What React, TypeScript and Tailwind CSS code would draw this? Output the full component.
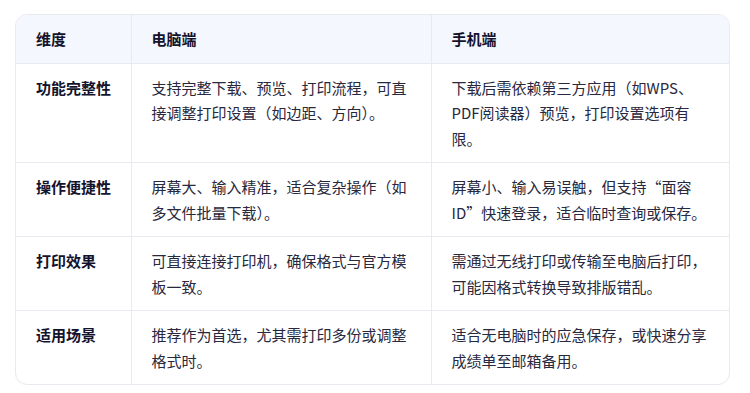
import React from 'react';

// ---------------------------------------------------------------------------
// Data
// ---------------------------------------------------------------------------

interface Row {
  dim: string;
  pc: string;
  mobile: string;
}

const headers = ['维度', '电脑端', '手机端'];

const rows: Row[] = [
  {
    dim: '功能完整性',
    pc: '支持完整下载、预览、打印流程，可直接调整打印设置（如边距、方向）。',
    mobile: '下载后需依赖第三方应用（如WPS、PDF阅读器）预览，打印设置选项有限。',
  },
  {
    dim: '操作便捷性',
    pc: '屏幕大、输入精准，适合复杂操作（如多文件批量下载）。',
    mobile: '屏幕小、输入易误触，但支持“面容ID”快速登录，适合临时查询或保存。',
  },
  {
    dim: '打印效果',
    pc: '可直接连接打印机，确保格式与官方模板一致。',
    mobile: '需通过无线打印或传输至电脑后打印，可能因格式转换导致排版错乱。',
  },
  {
    dim: '适用场景',
    pc: '推荐作为首选，尤其需打印多份或调整格式时。',
    mobile: '适合无电脑时的应急保存，或快速分享成绩单至邮箱备用。',
  },
];

// ---------------------------------------------------------------------------
// Component
// ---------------------------------------------------------------------------

export default function App() {
  return (
    <div className="min-h-[393px] w-[750px] bg-white pl-[15px] pt-[14px] font-['Noto_Sans_CJK_SC',sans-serif] text-[15px] leading-[25.5px]">
      <div className="w-[715px] overflow-hidden rounded-xl border border-[#e9e9f0]">
        <table className="w-full table-fixed border-collapse">
          <colgroup>
            <col className="w-[115px]" />
            <col className="w-[300px]" />
            <col />
          </colgroup>
          <thead>
            <tr className="bg-[#f5f7ff]">
              {headers.map((h, i) => (
                <th
                  key={h}
                  className={`whitespace-nowrap px-5 py-[11px] text-left font-bold text-[#13132e] ${
                    i > 0 ? 'border-l border-[#e9e9f0]' : ''
                  }`}
                >
                  {h}
                </th>
              ))}
            </tr>
          </thead>
          <tbody>
            {rows.map((r) => (
              <tr key={r.dim} className="border-t border-[#e9e9f0] align-top">
                <td className="whitespace-nowrap py-[11px] pl-5 pr-0 font-bold text-[#13132e]">{r.dim}</td>
                <td className="border-l border-[#e9e9f0] px-5 py-[11px] text-[#28283e]">{r.pc}</td>
                <td className="border-l border-[#e9e9f0] px-5 py-[11px] text-[#28283e]">{r.mobile}</td>
              </tr>
            ))}
          </tbody>
        </table>
      </div>
    </div>
  );
}
